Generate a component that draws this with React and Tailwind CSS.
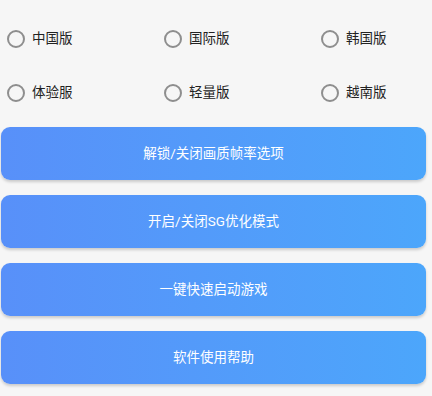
import React from "react";

const font = { fontFamily: '"Roboto", "Noto Sans CJK SC", sans-serif' };

function Radio({ label }) {
  return (
    <div className="flex items-center pl-[7px]">
      <span className="w-[18px] h-[18px] rounded-full border-2 border-[#8e8e8e] box-border" />
      <span className="ml-[7px] text-[13.5px] text-[#222222] leading-none">{label}</span>
    </div>
  );
}

function Btn({ label }) {
  return (
    <div className="mx-[1px] mr-[6px] h-[53px] rounded-[9px] bg-gradient-to-r from-[#5890f9] to-[#4ca6fb] shadow-[0_2px_3px_rgba(0,0,0,0.18)] flex items-center justify-center text-white text-[13.5px]">
      {label}
    </div>
  );
}

export default function App() {
  return (
    <div className="w-[432px] h-[396px] bg-[#f6f6f6] overflow-hidden" style={font}>
      <div className="grid grid-cols-[157px_157px_1fr] pt-[30px]">
        <div className="h-[18px] flex items-center"><Radio label="中国版" /></div>
        <div className="h-[18px] flex items-center"><Radio label="国际版" /></div>
        <div className="h-[18px] flex items-center"><Radio label="韩国版" /></div>
      </div>
      <div className="grid grid-cols-[157px_157px_1fr] mt-[36px]">
        <div className="h-[18px] flex items-center"><Radio label="体验服" /></div>
        <div className="h-[18px] flex items-center"><Radio label="轻量版" /></div>
        <div className="h-[18px] flex items-center"><Radio label="越南版" /></div>
      </div>
      <div className="mt-[25px] flex flex-col gap-[15px]">
        <Btn label="解锁/关闭画质帧率选项" />
        <Btn label="开启/关闭SG优化模式" />
        <Btn label="一键快速启动游戏" />
        <Btn label="软件使用帮助" />
      </div>
    </div>
  );
}
